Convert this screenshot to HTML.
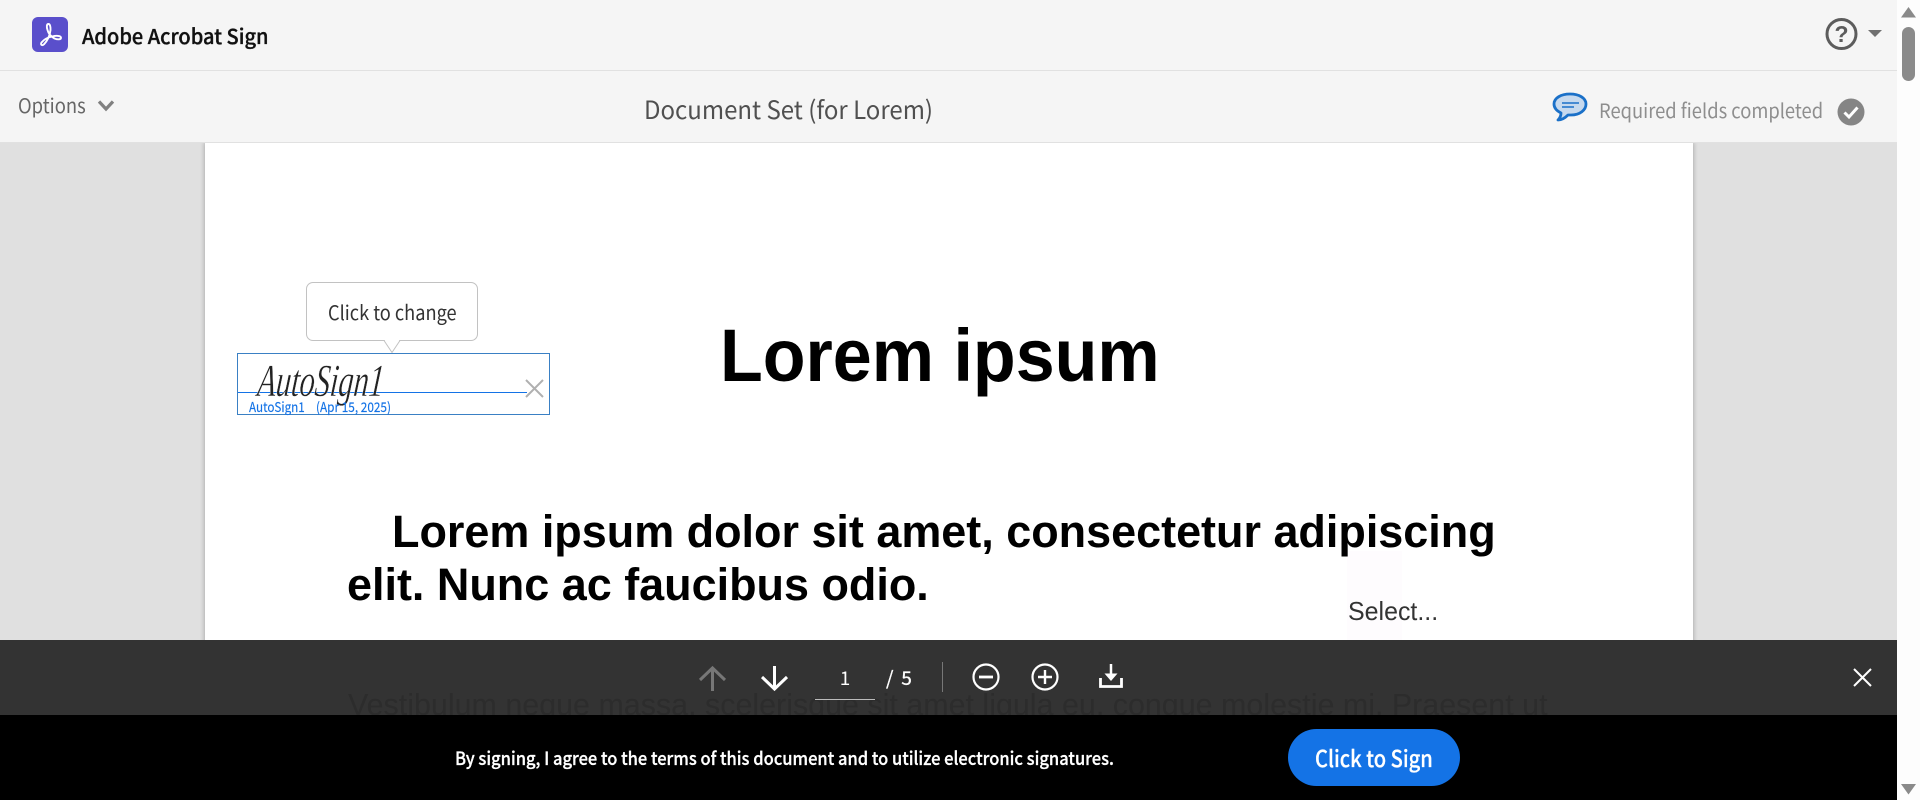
<!DOCTYPE html>
<html><head><meta charset="utf-8"><title>Adobe Acrobat Sign</title>
<style>
html,body{margin:0;padding:0;width:1920px;height:800px;overflow:hidden;background:#fff}
body{position:relative;font-family:"Noto Sans CJK JP","Liberation Sans",sans-serif}
.a{position:absolute;white-space:nowrap;line-height:1}
.s{transform-origin:0 0}
svg{position:absolute;overflow:visible}
.doc{font-family:"Liberation Sans",Arial,sans-serif}
</style></head><body>
<div class="a" style="left:0;top:142px;width:1897px;height:498px;background:#e0e0e0"></div>
<div class="a" style="left:205px;top:142px;width:1488px;height:658px;background:#fff;box-shadow:0 0 5px rgba(0,0,0,.3);overflow:hidden"></div>
<div class="a" style="left:1347px;top:551px;width:55px;height:89px;background:#fefcfe"></div>
<div class="a" style="left:0;top:0;width:1897px;height:70px;background:#f5f5f5;border-bottom:1px solid #e1e1e1"></div>
<div class="a" style="left:0;top:71px;width:1897px;height:71px;background:#f5f5f5;border-bottom:1px solid #e1e1e1"></div>
<svg style="left:32px;top:17px" width="36" height="35" viewBox="0 0 36 35"><rect width="36" height="35" rx="6" fill="#5a4fcb"/><path d="M16.500 7c-2 0-2 3-1 6 1 4 3.500 6.500 7 8.500 2.500 1 6.500 1.500 6.500-.7 0-2.300-5-2.300-9-1.300-4 .8-8 3-10.500 6-1.500 2.500 1 3.500 2.500 1.800 3-3 6-8.500 6.500-14.300.2-3-.5-6-2-6z" fill="none" stroke="#fff" stroke-width="1.900"/></svg>
<div class="a s" style="left:82px;top:25px;font-size:20.500px;font-weight:500;color:#111;-webkit-text-stroke:.35px #111;transform:scaleX(.975)">Adobe Acrobat Sign</div>
<div class="a s" style="left:18px;top:95px;font-size:20px;color:#666;transform:scaleX(.92)">Options</div>
<svg style="left:98px;top:100px" width="16" height="11"><path d="M1 1.500L8 9l7-7.500" fill="none" stroke="#808080" stroke-width="3.200"/></svg>
<div class="a s" style="left:644px;top:97px;font-size:25px;color:#505050;transform:scaleX(.96)">Document Set (for Lorem)</div>
<svg style="left:1552px;top:92px" width="36" height="31" viewBox="0 0 36 31"><path d="M18 2C9 2 2 6 2 12c0 4 3 7 7 9 0 2-1 5-3 7 4 0 7-2 10-5h3c9 0 15-5 15-11S27 2 18 2z" fill="#c6d9ee" stroke="#1a70c8" stroke-width="2.800" stroke-linejoin="round"/><path d="M10 11h17M10 15h12" stroke="#1a70c8" stroke-width="1.500"/></svg>
<div class="a s" style="left:1599px;top:100px;font-size:20px;color:#8e8e8e;transform:scaleX(.918)">Required fields completed</div>
<svg style="left:1837px;top:98px" width="28" height="28"><circle cx="14" cy="14" r="13.500" fill="#858585"/><path d="M7.500 14.500l4.500 4.500 8.500-9.500" fill="none" stroke="#fff" stroke-width="3"/></svg>
<svg style="left:1825px;top:18px" width="33" height="33"><circle cx="16.500" cy="16" r="14.500" fill="none" stroke="#5c5c5c" stroke-width="3"/><text x="16.500" y="24" text-anchor="middle" font-family="Liberation Sans" font-weight="700" font-size="23" fill="#5c5c5c">?</text></svg>
<svg style="left:1868px;top:30px" width="14" height="8"><path d="M0 0h14L7 7z" fill="#707070"/></svg>
<div class="a" style="left:1897px;top:0;width:23px;height:800px;background:#fdfdfd"></div>
<svg style="left:1901px;top:7px" width="15" height="11"><path d="M7.500 0L15 10.500H0z" fill="#8a8a8a"/></svg>
<div class="a" style="left:1902px;top:27px;width:13px;height:54px;border-radius:6.500px;background:#8a8a8a"></div>
<svg style="left:1901px;top:784px" width="15" height="11"><path d="M0 0h15L7.500 10.500z" fill="#8a8a8a"/></svg>

<div class="a doc s" style="left:720px;top:319px;font-size:74.500px;font-weight:700;color:#000;transform:scaleX(.94)">Lorem ipsum</div>
<div class="a doc s" style="left:392px;top:509px;font-size:45.400px;font-weight:700;color:#000;transform:scaleX(.99)">Lorem ipsum dolor sit amet, consectetur adipiscing</div>
<div class="a doc s" style="left:347px;top:562px;font-size:45.400px;font-weight:700;color:#000;transform:scaleX(.99)">elit. Nunc ac faucibus odio.</div>
<div class="a doc s" style="left:1348px;top:598px;font-size:26px;color:#333;transform:scaleX(.96)">Select...</div>

<div class="a" style="left:306px;top:282px;width:170px;height:57px;background:#fff;border:1px solid #c2c2c2;border-radius:7px"></div>
<div class="a s" style="left:328px;top:302px;font-size:20px;color:#333;transform:scaleX(.91)">Click to change</div>
<svg style="left:384px;top:340px" width="16" height="13"><path d="M0 .5L8 12.500 16 .5" fill="#fff" stroke="#c2c2c2"/><path d="M1 0h14" stroke="#fff" stroke-width="2"/></svg>
<div class="a" style="left:237px;top:353px;width:311px;height:60px;border:1px solid #3a80c4"></div>
<div class="a" style="left:238px;top:392px;width:289px;height:1px;background:#1473e6"></div>
<svg style="left:525px;top:379px" width="19" height="19"><path d="M1 1l17 17M18 1L1 18" stroke="#b0b0b0" stroke-width="2"/></svg>
<div class="a s" style="left:260px;top:358px;font-family:'Liberation Serif',serif;font-style:italic;font-size:46px;color:#222;-webkit-text-stroke:.4px #fff;transform:scaleX(.66) skewX(-8deg)">AutoSign1</div>
<div class="a s" style="left:249px;top:400px;font-size:13.500px;color:#1473e6;-webkit-text-stroke:.15px #1473e6;transform:scaleX(.865)">AutoSign1</div>
<div class="a s" style="left:316px;top:400px;font-size:13.500px;color:#1473e6;-webkit-text-stroke:.15px #1473e6;transform:scaleX(.875)">(Apr 15, 2025)</div>

<div class="a" style="left:0;top:640px;width:1897px;height:75px;background:#333;overflow:hidden">
<div class="a doc" style="left:348px;top:50px;font-size:30.450px;color:#2c2c2c">Vestibulum neque massa, scelerisque sit amet ligula eu, congue molestie mi. Praesent ut</div>
</div>
<div class="a" style="left:0;top:715px;width:1897px;height:85px;background:#000"></div>

<svg style="left:698px;top:666px" width="29" height="25"><path d="M14.500 25V2M2 14L14.500 2 27 14" fill="none" stroke="#777" stroke-width="3"/></svg>
<svg style="left:760px;top:666px" width="29" height="25"><path d="M14.500 0V23M2 11l12.500 12L27 11" fill="none" stroke="#fff" stroke-width="3"/></svg>
<div class="a" style="left:815px;top:668px;width:60px;text-align:center;font-size:19px;color:#fff">1</div>
<div class="a" style="left:815px;top:699px;width:60px;height:1px;background:#bbb"></div>
<div class="a" style="left:886px;top:668px;font-size:19px;color:#fff;word-spacing:3.500px;-webkit-text-stroke:.3px #fff">/ 5</div>
<div class="a" style="left:942px;top:662px;width:1px;height:30px;background:#777"></div>
<svg style="left:972px;top:663px" width="28" height="28"><circle cx="14" cy="14" r="12.500" fill="none" stroke="#fff" stroke-width="2.200"/><path d="M7 14h14" stroke="#fff" stroke-width="2.800"/></svg>
<svg style="left:1031px;top:663px" width="28" height="28"><circle cx="14" cy="14" r="12.500" fill="none" stroke="#fff" stroke-width="2.200"/><path d="M7 14h14M14 7v14" stroke="#fff" stroke-width="2.400"/></svg>
<svg style="left:1099px;top:664px" width="24" height="24"><path d="M12 0v12" stroke="#fff" stroke-width="2.500"/><path d="M5.500 9.500h13L12 17z" fill="#fff"/><path d="M1.500 14v8.500h21V14" fill="none" stroke="#fff" stroke-width="2.800"/></svg>
<svg style="left:1853px;top:668px" width="19" height="19"><path d="M1 1l17 17M18 1L1 18" stroke="#fff" stroke-width="2"/></svg>

<div class="a s" style="left:455px;top:749px;font-size:18px;font-weight:500;color:#fff;-webkit-text-stroke:.3px #fff;transform:scaleX(.917)">By signing, I agree to the terms of this document and to utilize electronic signatures.</div>
<div class="a" style="left:1288px;top:729px;width:172px;height:57px;border-radius:29px;background:#1473e6"></div>
<div class="a s" style="left:1315px;top:746px;font-size:23px;font-weight:500;color:#fff;-webkit-text-stroke:.25px #fff;transform:scaleX(.873)">Click to Sign</div>
</body></html>
